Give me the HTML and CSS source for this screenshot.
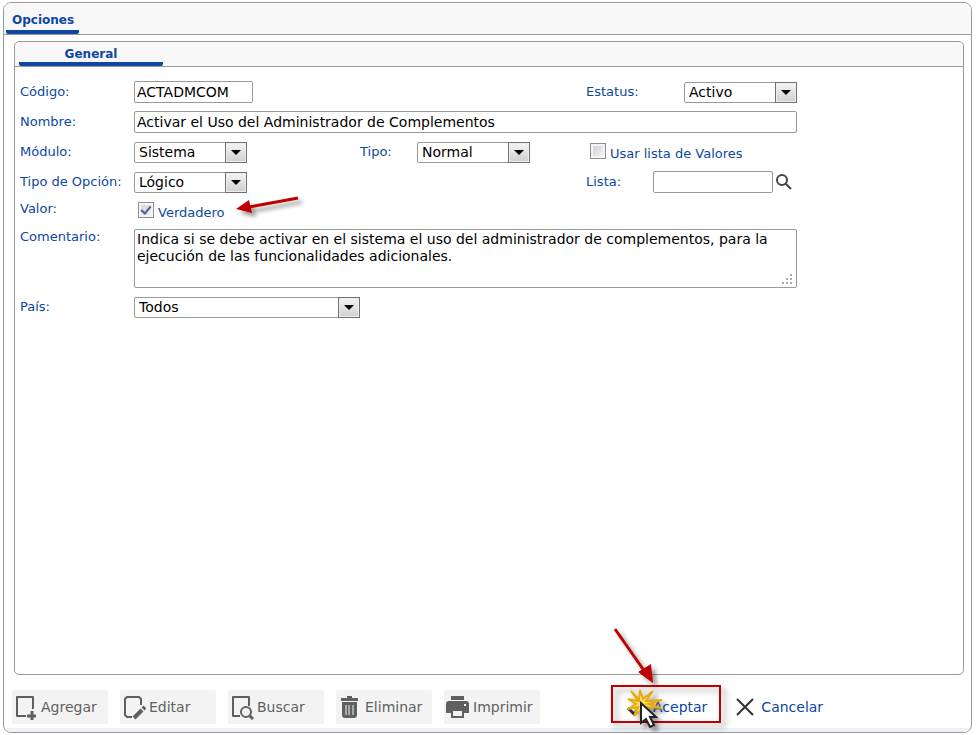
FILE: index.html
```html
<!DOCTYPE html>
<html lang="es">

<head>
    <meta charset="UTF-8" />
    <meta name="viewport" content="width=device-width, initial-scale=1.0" />
    <title>Opciones</title>
    <link rel="stylesheet" href="styles.css">
</head>

<body>
    <main class="window">
        <header class="window-header">
            <h1 class="window-title">Opciones</h1>
        </header>

        <section class="panel">
            <div class="panel-header">
                <h2 class="tab">General</h2>
            </div>

            <form class="form" id="option-form">
                <label class="first" for="codigo">Código:</label>
                <div class="cell">
                    <input class="text code" type="text" id="codigo" value="ACTADMCOM">
                </div>
                <div class="cell side">
                    <label for="estatus">Estatus:</label>
                    <span class="select">
                        <select id="estatus">
                            <option>Activo</option>
                            <option>Inactivo</option>
                        </select>
                    </span>
                </div>

                <label class="first" for="nombre">Nombre:</label>
                <div class="cell wide">
                    <input class="text" type="text" id="nombre" value="Activar el Uso del Administrador de Complementos">
                </div>

                <label class="first" for="modulo">Módulo:</label>
                <div class="cell">
                    <span class="select">
                        <select id="modulo">
                            <option>Sistema</option>
                        </select>
                    </span>
                </div>
                <label for="tipo">Tipo:</label>
                <div class="cell">
                    <span class="select">
                        <select id="tipo">
                            <option>Normal</option>
                        </select>
                    </span>
                </div>
                <div class="cell side">
                    <label class="check"><input type="checkbox" id="usar-lista">Usar lista de Valores</label>
                </div>

                <label class="first" for="tipo-opcion">Tipo de Opción:</label>
                <div class="cell">
                    <span class="select">
                        <select id="tipo-opcion">
                            <option>Lógico</option>
                        </select>
                    </span>
                </div>
                <div class="cell side list">
                    <label for="lista">Lista:</label>
                    <input class="text" type="text" id="lista">
                    <button class="search" type="button" aria-label="Buscar lista">
                        <svg width="18" height="18" viewBox="0 0 18 18">
                            <circle cx="7" cy="7" r="5" fill="none" stroke="#444" stroke-width="2" />
                            <path d="M10 10 L16 16" stroke="#444" stroke-width="2" />
                        </svg>
                    </button>
                </div>

                <label class="first top" for="valor">Valor:</label>
                <div class="cell value">
                    <label class="check"><input type="checkbox" id="valor" checked>Verdadero</label>
                    <svg class="arrow-value" width="66" height="22" viewBox="0 0 66 22">
                        <path d="M63 3 L14 12" stroke="#c00000" stroke-width="3" />
                        <path d="M1 14 L14 5 L17 18 Z" fill="#c00000" />
                    </svg>
                </div>

                <label class="first top" for="comentario">Comentario:</label>
                <div class="cell wide comment">
                    <textarea id="comentario">Indica si se debe activar en el sistema el uso del administrador de complementos, para la ejecución de las funcionalidades adicionales.</textarea>
                    <svg class="grip" width="12" height="12" viewBox="0 0 12 12" fill="#aaa">
                        <path d="M8 1h2v2h-2z M8 5h2v2h-2z M4 5h2v2h-2z M8 9h2v2h-2z M4 9h2v2h-2z M0 9h2v2h-2z" />
                    </svg>
                </div>

                <label class="first" for="pais">País:</label>
                <div class="cell">
                    <span class="select large">
                        <select id="pais">
                            <option>Todos</option>
                        </select>
                    </span>
                </div>
            </form>
        </section>

        <footer class="toolbar">
            <div class="actions">
                <button class="btn" type="button" disabled>
                    <svg width="24" height="26" viewBox="0 0 24 26" fill="none" stroke="#606060" stroke-width="2" stroke-linejoin="round">
                        <path d="M12 22H3V3h16v12" />
                        <path d="M18 17v9 M13 22h9" stroke-width="3" />
                    </svg>
                    Agregar
                </button>
                <button class="btn" type="button" disabled>
                    <svg width="24" height="26" viewBox="0 0 24 26" fill="none" stroke="#606060" stroke-width="2">
                        <path d="M10 23H5l-2-2V5l2-2h12l2 2v6" />
                        <path d="M12 24l8-8" stroke-width="4" />
                        <path d="M21 15l2-2" stroke-width="4" />
                    </svg>
                    Editar
                </button>
                <button class="btn" type="button" disabled>
                    <svg width="24" height="26" viewBox="0 0 24 26" fill="none" stroke="#606060" stroke-width="2" stroke-linejoin="round">
                        <path d="M10 22H3V3h16v9" />
                        <circle cx="16" cy="18" r="5" />
                        <path d="M19 21l4 4" stroke-width="3" />
                    </svg>
                    Buscar
                </button>
                <button class="btn" type="button" disabled>
                    <svg width="24" height="26" viewBox="0 0 24 26" fill="#606060">
                        <path d="M3 4h6V2h5v2h6v3H3z M4 8h15v13q0 3-3 3H7q-3 0-3-3z" />
                        <path d="M8 11v10 M11 11v10 M15 11v10" stroke="#f3f3f3" />
                    </svg>
                    Eliminar
                </button>
                <button class="btn" type="button" disabled>
                    <svg width="24" height="26" viewBox="0 0 24 26" fill="#606060">
                        <path d="M5 2h13v4H5z M3 7h17q3 0 3 3v9h-5v5H5v-5H0v-9q0-3 3-3z" />
                        <path d="M7 17h9v5H7z M18 10h2v2h-2z" fill="#f3f3f3" />
                    </svg>
                    Imprimir
                </button>
            </div>

            <div class="confirm">
                <button class="link accept" type="submit" form="option-form">
                    <svg width="24" height="24" viewBox="0 0 24 24" fill="none" stroke="#333" stroke-width="3">
                        <path d="M2 13l6 6L20 7" />
                    </svg>
                    Aceptar
                </button>
                <button class="link" type="reset" form="option-form">
                    <svg width="20" height="20" viewBox="0 0 20 20" fill="none" stroke="#333" stroke-width="2">
                        <path d="M2 2l16 16 M18 2L2 18" />
                    </svg>
                    Cancelar
                </button>

                <span class="highlight"></span>
                <svg class="arrow-accept" width="44" height="60" viewBox="0 0 44 60">
                    <path d="M3 3 L33 46" stroke="#c00000" stroke-width="3" />
                    <path d="M26 46 L39 38 L41 57 Z" fill="#c00000" />
                </svg>
                <svg class="pointer" width="40" height="44" viewBox="0 0 40 44">
                    <path d="M5 3 L13 12 L14 2 L17 11 L27 3 L20 13 L36 12 L22 16 L35 20 L21 19 L24 27 L17 20 L8 28 L12 19 L2 21 L10 16 L2 11 L12 13 Z" fill="#ffe066" stroke="#e5ac12" stroke-width="2" />
                    <path d="M15 15 V35 L20 31 L24 39 L28 37 L24 29 H30 Z" fill="#fff" stroke="#222" stroke-width="2" />
                </svg>
            </div>
        </footer>
    </main>
</body>

</html>
```
FILE: styles.css
```css
*,
*::before,
*::after {
    margin: 0;
    padding: 0;
    box-sizing: border-box;
}

body {
    font-family: "DejaVu Sans", Verdana, sans-serif;
    font-size: 13px;
    color: #0d47a1;
    background: #fff;
    padding: 2px 4px 2px 3px;
}

button,
input,
select,
textarea {
    font-family: inherit;
    font-size: 14px;
    color: #000;
}

.window {
    display: flex;
    flex-direction: column;
    min-height: calc(100vh - 4px);
    border: 1px solid #999;
    border-radius: 8px;
    overflow: hidden;
}

/* Headers and tabs */
.window-header {
    display: flex;
    height: 32px;
    padding-left: 2px;
    background: #f8f8f8;
    border-bottom: 1px solid #999;
}

.window-title,
.tab {
    font-size: 12px;
    line-height: 16px;
    border-bottom: 4px solid #0d47a1;
    border-radius: 2px;
}

.window-title {
    padding: 9px 5px 0 6px;
}

.panel {
    flex: 1;
    margin: 6px 7px 0 10px;
    border: 1px solid #999;
    border-radius: 5px;
}

.panel-header {
    display: flex;
    height: 25px;
    padding-left: 4px;
    background: #f8f8f8;
    border-bottom: 1px solid #999;
    border-radius: 5px 5px 0 0;
}

.tab {
    width: 144px;
    padding-top: 4px;
    text-align: center;
}

/* Form */
.form {
    display: grid;
    grid-template-columns: 114px 226px 57px 1fr 211px;
    grid-template-rows: repeat(4, 22px) 20px auto 22px;
    row-gap: 8px;
    max-width: 782px;
    padding: 14px 0 14px 5px;
    align-items: center;
}

.form label {
    line-height: 16px;
    white-space: nowrap;
}

.form .first {
    grid-column: 1;
}

.form .top {
    align-self: start;
}

.cell {
    display: flex;
    align-items: center;
}

.side {
    grid-column: 5;
    justify-content: space-between;
}

.wide {
    grid-column: 2 / -1;
}

.text {
    width: 100%;
    height: 22px;
    padding: 0 2px;
    border: 1px solid #999;
    border-radius: 2px;
}

.code {
    width: 119px;
}

.select {
    position: relative;
    width: 113px;
    height: 21px;
}

.large {
    width: 226px;
}

.select select {
    display: block;
    width: 100%;
    height: 100%;
    padding: 0 24px 0 4px;
    appearance: none;
    background: #fff;
    border: 1px solid #999;
    border-radius: 2px;
}

.select::before {
    content: "";
    position: absolute;
    top: 0;
    right: 0;
    width: 22px;
    height: 21px;
    background: linear-gradient(#f4f4f4, #cfcfcf);
    border: 1px solid #707070;
    box-shadow: inset 0 0 0 1px #eee;
    pointer-events: none;
}

.select::after {
    content: "";
    position: absolute;
    top: 8px;
    right: 6px;
    border: 5px solid transparent;
    border-top-color: #000;
    border-bottom: 0;
    pointer-events: none;
}

.check {
    display: flex;
    align-items: flex-end;
    gap: 4px;
    height: 20px;
    padding-left: 4px;
}

.check input {
    position: relative;
    width: 16px;
    height: 16px;
    margin-bottom: 3px;
    appearance: none;
    background: linear-gradient(135deg, #cbcfd5, #f6f6f6);
    border: 1px solid #8e8f8f;
    box-shadow: inset 0 0 0 2px #f4f4f4;
}

.check input:checked::after {
    content: "";
    position: absolute;
    top: 1px;
    left: 4px;
    width: 6px;
    height: 10px;
    border: solid #4b5f97;
    border-width: 0 2px 2px 0;
    transform: rotate(40deg);
}

.list {
    justify-content: flex-start;
}

.list label {
    width: 67px;
}

.list .text {
    width: 120px;
}

.search {
    height: 18px;
    margin-left: 2px;
    background: none;
    border: 0;
    cursor: pointer;
}

.value,
.comment {
    position: relative;
}

.comment textarea {
    display: block;
    width: 100%;
    height: 59px;
    padding: 1px 2px;
    line-height: 17px;
    border: 1px solid #999;
    border-radius: 2px;
    resize: none;
}

.grip {
    position: absolute;
    right: 3px;
    bottom: 3px;
    pointer-events: none;
}

/* Toolbar */
.toolbar {
    display: flex;
    gap: 72px;
    padding: 15px 8px 4px;
    border-bottom: 4px solid #eef2f6;
}

.actions {
    display: flex;
    gap: 12px;
}

.btn {
    display: flex;
    align-items: center;
    gap: 3px;
    width: 96px;
    height: 34px;
    padding-left: 2px;
    color: #606060;
    background: #f3f3f3;
    border: 0;
    border-radius: 3px;
}

.confirm {
    position: relative;
    display: flex;
    gap: 28px;
    padding-left: 14px;
}

.link {
    display: flex;
    align-items: center;
    gap: 6px;
    height: 34px;
    color: #0d47a1;
    background: none;
    border: 0;
    cursor: pointer;
}

.accept {
    gap: 3px;
}

/* Step marks */
.highlight {
    position: absolute;
    top: -5px;
    left: -1px;
    width: 110px;
    height: 38px;
    border: 2px solid #c00000;
    filter: drop-shadow(4px 4px 3px rgba(0, 0, 0, 0.4));
    pointer-events: none;
}

.arrow-value,
.arrow-accept,
.pointer {
    position: absolute;
    overflow: visible;
    filter: drop-shadow(4px 4px 2px rgba(0, 0, 0, 0.4));
    pointer-events: none;
}

.arrow-value {
    top: -6px;
    left: 101px;
}

.arrow-accept {
    top: -64px;
    left: 0;
}

.pointer {
    top: -2px;
    left: 14px;
}
```
